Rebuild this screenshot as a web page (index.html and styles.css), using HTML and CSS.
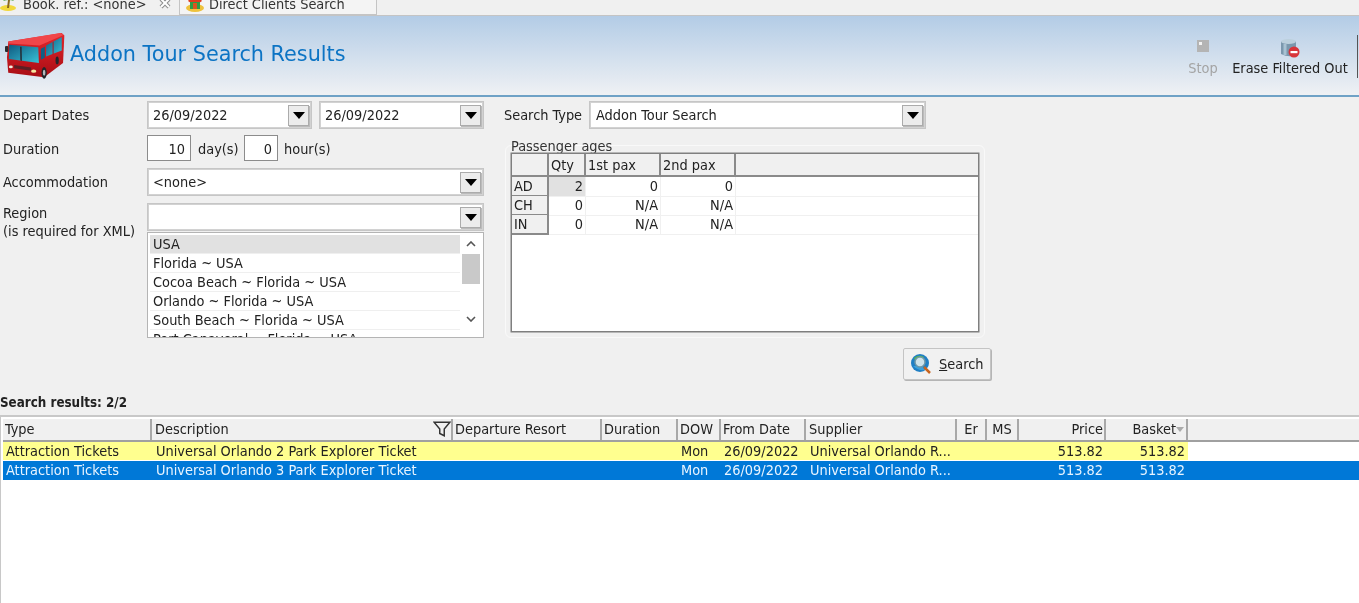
FILE: index.html
```html
<!DOCTYPE html>
<html lang="en">
<head>
<meta charset="utf-8">
<title>Addon Tour Search Results</title>
<link rel="stylesheet" href="styles.css">
</head>
<body>
<nav class="tabs">
  <div class="tab tab-active">
    <svg class="tab-icon" viewBox="0 0 18 14"><ellipse cx="8" cy="11" rx="8" ry="3" fill="#f2d83c"/><path d="M8 11 L9 3" stroke="#8a6a20" stroke-width="2"/><path d="M3 4 Q9 -2 14 4 Q9 2 3 4Z" fill="#3f9a35"/></svg>
    <span class="tab-text">Book. ref.: &lt;none&gt;</span>
    <svg class="tab-close" viewBox="0 0 14 14"><path d="M3 3 L11 11 M11 3 L3 11" stroke="#8d8d8d" stroke-width="4"/><path d="M3 3 L11 11 M11 3 L3 11" stroke="#fff" stroke-width="2"/></svg>
  </div>
  <div class="tab tab-other">
    <svg class="tab-icon" viewBox="0 0 18 18"><ellipse cx="9" cy="14" rx="9" ry="4" fill="#eec23c"/><path d="M2 7 Q9 -2 16 7 L13 9 H5Z" fill="#de3a1e"/><rect x="4" y="8" width="10" height="7" fill="#2f9a45"/><rect x="7" y="9" width="4" height="6" fill="#d9521f"/></svg>
    <span class="tab-text">Direct Clients Search</span>
  </div>
</nav>

<header class="banner">
  <svg class="bus" viewBox="12 22 184 145">
    <defs>
      <linearGradient id="glass" x1="0" y1="0" x2="1" y2="1"><stop offset="0" stop-color="#0f5a80"/><stop offset="1" stop-color="#39c3d8"/></linearGradient>
      <linearGradient id="side" x1="0" y1="0" x2="0" y2="1"><stop offset="0" stop-color="#e3262c"/><stop offset="1" stop-color="#a80d14"/></linearGradient>
    </defs>
    <path d="M22 50 L186 24 L194 32 L190 116 L132 160 L22 146 L18 100Z" fill="url(#side)"/>
    <path d="M22 50 L182 24 L192 30 L118 62 L24 56Z" fill="#f0464a"/>
    <path d="M25 60 L114 68 L116 116 L24 104Z" fill="url(#glass)"/>
    <path d="M58 66 L63 66 L64 110 L59 108Z" fill="#24323c"/>
    <path d="M122 72 L134 66 L134 100 L122 106Z" fill="#0c5f85"/>
    <path d="M138 62 L186 36 L186 78 L138 96Z" fill="url(#glass)"/>
    <path d="M158 52 L161 50 L161 88 L158 90Z" fill="#b0141a"/>
    <path d="M40 122 L92 130 L92 140 L40 132Z" fill="#5b2024"/>
    <ellipse cx="30" cy="128" rx="6" ry="4" fill="#f1efe0"/>
    <ellipse cx="100" cy="141" rx="8" ry="5" fill="#f5e7a0"/>
    <ellipse cx="132" cy="146" rx="8" ry="18" fill="#23252a"/>
    <ellipse cx="132" cy="146" rx="4" ry="9" fill="#b5b8bc"/>
    <ellipse cx="172" cy="108" rx="5" ry="12" fill="#23252a"/>
    <rect x="12" y="64" width="10" height="18" rx="3" fill="#2a2c30"/>
  </svg>
  <h1 class="title">Addon Tour Search Results</h1>
  <div class="tools">
    <div class="tool tool-stop">
      <svg class="tool-icon-stop" viewBox="0 0 12 12"><rect width="12" height="12" fill="#b4b4b4"/><rect x="2" y="2" width="3" height="3" fill="#f2f2f2"/></svg>
      <span>Stop</span>
    </div>
    <div class="tool tool-erase">
      <svg class="tool-icon-erase" viewBox="0 0 20 20"><path d="M1 3 V16 Q9 20 16 17 V3Z" fill="#7b98ad"/><ellipse cx="8.500" cy="3.500" rx="7.500" ry="2.500" fill="#bcd0dd"/><path d="M5 6 V17" stroke="#a9c2d2" stroke-width="3"/><circle cx="14" cy="14" r="5.500" fill="#d8353a"/><rect x="10.500" y="13" width="7" height="2.200" fill="#fff"/></svg>
      <span>Erase Filtered Out</span>
    </div>
    <div class="tool-sep"></div>
  </div>
</header>

<section class="form">
  <div class="form-left">
    <div class="row row-date">
      <label class="lbl">Depart Dates</label>
      <div class="field-pair">
        <div class="combo"><span class="combo-text">26/09/2022</span><span class="drop"><i class="tri"></i></span></div>
        <div class="combo"><span class="combo-text">26/09/2022</span><span class="drop"><i class="tri"></i></span></div>
      </div>
    </div>
    <div class="row row-duration">
      <label class="lbl">Duration</label>
      <div class="spin spin-day">10</div><span class="unit unit-day">day(s)</span>
      <div class="spin spin-hour">0</div><span class="unit unit-hour">hour(s)</span>
    </div>
    <div class="row row-acc">
      <label class="lbl">Accommodation</label>
      <div class="combo combo-wide"><span class="combo-text">&lt;none&gt;</span><span class="drop"><i class="tri"></i></span></div>
    </div>
    <div class="row row-region">
      <label class="lbl lbl-two">Region<br>(is required for XML)</label>
      <div class="region">
        <div class="combo combo-wide"><span class="combo-text"></span><span class="drop"><i class="tri"></i></span></div>
        <div class="list">
          <div class="list-items">
            <div class="item item-sel">USA</div>
            <div class="item">Florida ~ USA</div>
            <div class="item">Cocoa Beach ~ Florida ~ USA</div>
            <div class="item">Orlando ~ Florida ~ USA</div>
            <div class="item">South Beach ~ Florida ~ USA</div>
            <div class="item">Port Canaveral ~ Florida ~ USA</div>
          </div>
          <div class="scroll">
            <svg class="chev" viewBox="0 0 10 6"><path d="M1 5 L5 1 L9 5" fill="none" stroke="#555" stroke-width="1.600"/></svg>
            <div class="thumb"></div>
            <svg class="chev chev-down" viewBox="0 0 10 6"><path d="M1 1 L5 5 L9 1" fill="none" stroke="#555" stroke-width="1.600"/></svg>
          </div>
        </div>
      </div>
    </div>
  </div>

  <div class="form-right">
    <div class="row row-type">
      <label class="lbl lbl-type">Search Type</label>
      <div class="combo combo-type"><span class="combo-text">Addon Tour Search</span><span class="drop"><i class="tri"></i></span></div>
    </div>
    <fieldset class="group">
      <div class="group-label">Passenger ages</div>
      <div class="pax">
        <div class="pax-row pax-head">
          <div class="ph"></div><div class="ph">Qty</div><div class="ph">1st pax</div><div class="ph">2nd pax</div><div class="ph ph-fill"></div>
        </div>
        <div class="pax-row">
          <div class="prh">AD</div><div class="pc pc-sel">2</div><div class="pc">0</div><div class="pc">0</div><div class="pc-fill"></div>
        </div>
        <div class="pax-row">
          <div class="prh">CH</div><div class="pc">0</div><div class="pc">N/A</div><div class="pc">N/A</div><div class="pc-fill"></div>
        </div>
        <div class="pax-row">
          <div class="prh">IN</div><div class="pc">0</div><div class="pc">N/A</div><div class="pc">N/A</div><div class="pc-fill"></div>
        </div>
      </div>
    </fieldset>
    <button class="search-btn" type="button">
      <svg class="search-icon" viewBox="0 0 22 22"><circle cx="10" cy="10" r="9" fill="#1f7fc4"/><path d="M4 5 Q9 1 14 4 L12 8 L6 9Z" fill="#58b848"/><path d="M3 13 Q8 18 15 17 L12 13Z" fill="#3aa0dc"/><circle cx="10" cy="9" r="5" fill="#cfe3ea" stroke="#6f98a8" stroke-width="1.500"/><path d="M14 14 L20 20" stroke="#c8641e" stroke-width="2.500"/></svg>
      <span><u>S</u>earch</span>
    </button>
  </div>
</section>

<div class="results-label">Search results: 2/2</div>

<section class="results">
  <div class="res-row res-head">
    <div class="hc">Type</div>
    <div class="hc hc-filter hc-in">Description<svg class="filter" viewBox="0 0 16 14"><path d="M1 1 H15 L10 7 V13 L6 11 V7Z" fill="none" stroke="#333" stroke-width="1.300"/></svg></div>
    <div class="hc">Departure Resort</div>
    <div class="hc">Duration</div>
    <div class="hc">DOW</div>
    <div class="hc">From Date</div>
    <div class="hc hc-in">Supplier</div>
    <div class="hc hc-center">Er</div>
    <div class="hc hc-center">MS</div>
    <div class="hc hc-right">Price</div>
    <div class="hc hc-right hc-sort">Basket<i class="sort"></i></div>
    <div class="hc-fill"></div>
  </div>
  <div class="res-row res-yellow">
    <div class="c">Attraction Tickets</div>
    <div class="c c-in">Universal Orlando 2 Park Explorer Ticket</div>
    <div class="c"></div><div class="c"></div>
    <div class="c">Mon</div>
    <div class="c">26/09/2022</div>
    <div class="c c-in">Universal Orlando R...</div>
    <div class="c"></div><div class="c"></div>
    <div class="c c-right">513.82</div>
    <div class="c c-right">513.82</div>
  </div>
  <div class="res-row res-blue">
    <div class="c">Attraction Tickets</div>
    <div class="c c-in">Universal Orlando 3 Park Explorer Ticket</div>
    <div class="c"></div><div class="c"></div>
    <div class="c">Mon</div>
    <div class="c">26/09/2022</div>
    <div class="c c-in">Universal Orlando R...</div>
    <div class="c"></div><div class="c"></div>
    <div class="c c-right">513.82</div>
    <div class="c c-right">513.82</div>
  </div>
</section>
</body>
</html>
```
FILE: styles.css
```css
* { box-sizing: border-box; }
html, body { margin: 0; padding: 0; height: 603px; overflow: hidden; }
body {
  background: #f0f0f0;
  color: #222;
  font-family: "DejaVu Sans Condensed", "DejaVu Sans", sans-serif;
  font-size: 14.4px;
  line-height: 16px;
  filter: blur(0.35px);
}

/* tabs */
.tabs { display: flex; height: 16px; border-bottom: 1px solid #c4c4c4; overflow: hidden; }
.tab { display: flex; align-items: center; height: 15px; position: relative; }
.tab-active { width: 179px; }
.tab-other { width: 198px; background: #f4f4f4; border: 1px solid #c4c4c4; border-top: 0; padding-left: 6px; }
.tab-icon { width: 18px; height: 18px; flex: none; margin-top: -9px; }
.tab-active .tab-icon { margin-left: 0; margin-top: -8px; }
.tab-text { margin-left: 5px; margin-top: -7px; white-space: nowrap; color: #333; }
.tab-close { width: 14px; height: 14px; margin-left: 11px; margin-top: -10px; flex: none; }

/* banner */
.banner {
  display: flex;
  align-items: flex-start;
  height: 81px;
  padding-left: 5px;
  background: linear-gradient(#b3cce6, #eff1f4);
  border-bottom: 2px solid #6fa2c6;
}
.bus { width: 60px; height: 52px; margin-top: 14px; flex: none; }
.title {
  margin: 26px 0 0 5px;
  font-family: "DejaVu Sans", sans-serif;
  font-size: 20.750px;
  line-height: 24px;
  font-weight: 400;
  color: #0c74c4;
}
.tools { display: flex; margin-left: auto; height: 100%; }
.tool { display: flex; flex-direction: column; align-items: center; white-space: nowrap; }
.tool-stop { width: 30px; color: #a4a4a4; margin-right: 14px; }
.tool-erase { width: 116px; color: #222; }
.tool-icon-stop { width: 12px; height: 12px; margin-top: 24px; margin-bottom: 8px; }
.tool-icon-erase { width: 20px; height: 20px; margin-top: 22px; margin-bottom: 2px; }
.tool-sep { width: 1px; height: 43px; margin: 19px 1px 0 9px; background: #555; }

/* form */
.form { display: flex; height: 283px; padding: 4px 0 0 3px; }
.form-left { width: 481px; flex: none; }
.form-right { width: 487px; margin-left: 20px; display: flex; flex-direction: column; flex: none; }
.row { display: flex; align-items: center; }
.row-date, .row-acc, .row-type { height: 28px; }
.row-duration { height: 26px; margin: 6px 0 7px; padding-top: 0; }
.row-duration .lbl, .row-duration .unit { padding-top: 2px; }
.row-region { align-items: flex-start; margin-top: 7px; }
.lbl { width: 144px; flex: none; white-space: nowrap; }
.lbl-two { line-height: 18px; margin-top: 1px; }
.lbl-type { width: 85px; }
.field-pair { display: flex; gap: 7px; flex: 1; }
.combo {
  display: flex; align-items: center; justify-content: space-between;
  width: 165px; height: 28px; padding: 0 2px 0 5px;
  background: #fff; border: 1px solid #c6c6c6;
  box-shadow: inset 0 0 0 1px #d2d2d2;
}
.combo-wide { width: 337px; }
.combo-type { width: 337px; padding-left: 6px; }
.combo-text { white-space: nowrap; }
.drop {
  display: flex; align-items: center; justify-content: center;
  width: 21px; height: 21px; flex: none;
  background: #ececec; border: 1px solid #ababab;
  box-shadow: 1px 1px 0 #bbb;
}
.tri { width: 0; height: 0; border: 6px solid transparent; border-top: 7px solid #000; border-bottom: 0; }
.spin { height: 26px; background: #fff; border: 1px solid #8c8c8c; text-align: right; line-height: 26px; padding-right: 5px; flex: none; }
.spin-day { width: 44px; }
.spin-hour { width: 34px; }
.unit { white-space: nowrap; }
.unit-day { width: 53px; padding-left: 7px; }
.unit-hour { padding-left: 6px; }
.region { width: 337px; flex: none; }
.list {
  display: flex; height: 106px; margin-top: 1px; padding: 2px 0 0 2px;
  background: #fff; border: 1px solid #b4b4b4; overflow: hidden;
}
.list-items { width: 310px; flex: none; }
.item { height: 19px; line-height: 19px; padding-left: 3px; border-bottom: 1px solid #efefef; white-space: nowrap; }
.item-sel { background: #e1e1e1; }
.scroll { width: 18px; margin-left: 2px; display: flex; flex-direction: column; align-items: center; }
.chev { width: 10px; height: 6px; margin-top: 6px; flex: none; }
.thumb { width: 18px; height: 30px; margin-top: 7px; background: #c9c9c9; flex: none; }
.chev-down { margin-top: 32px; }

/* passenger grid */
.group {
  width: 480px; height: 193px; margin: 16px 0 0 1px; padding: 0 5px 0 5px;
  border: 1px solid #f9f9f9; border-radius: 6px; min-width: 0;
}
.group-label { height: 15px; margin-top: -8px; line-height: 16px; color: #333; }
.pax {
  position: relative; height: 179px; background: #fff; border: 1px solid #7f7f7f;
  box-shadow: 0 0 0 0.500px #7f7f7f;
}
.pax-row { display: grid; grid-template-columns: 37px 37px 75px 75px 1fr; height: 19px; }
.pax-head { height: 23px; background: #f0f0f0; border-bottom: 2px solid #8a8a8a; }
.ph { border-right: 2px solid #8a8a8a; padding-left: 2px; line-height: 22px; white-space: nowrap; }
.ph-fill { border-right: 0; }
.prh { background: #f0f0f0; border-right: 2px solid #8a8a8a; border-bottom: 2px solid #8a8a8a; padding-left: 2px; line-height: 18px; }
.pc { text-align: right; padding-right: 2px; line-height: 18px; border-bottom: 1px solid #f0f0f0; border-right: 1px solid #f0f0f0; }
.pc-sel { background: #e1e1e1; }
.pc-fill { border-bottom: 1px solid #f0f0f0; }

.search-btn {
  display: flex; align-items: center; align-self: flex-end;
  width: 88px; height: 32px; margin-top: 10px; padding: 0 0 0 6px;
  background: #f1f1f1; border: 1px solid #c4c4c4; border-radius: 2px;
  box-shadow: 1px 1px 0 #b5b5b5;
  font: inherit; color: #222;
}
.search-icon { width: 22px; height: 22px; flex: none; margin-right: 7px; }

/* results */
.results-label { height: 16px; margin-top: 15px; margin-bottom: -1px; font-weight: 700; font-size: 13.300px; white-space: nowrap; }
.results {
  height: 188px; margin-top: 5px; padding: 2px 0 0 2px;
  background: #fff; border-top: 2px solid #c8c8c8; border-left: 1px solid #c8c8c8;
}
.res-row {
  display: grid;
  grid-template-columns: 149px 301px 149px 76px 43px 85px 151px 30px 32px 87px 82px 1fr;
  white-space: nowrap;
}
.res-head { height: 23px; background: #f0f0f0; border-bottom: 2px solid #a0a0a0; }
.hc { border-right: 2px solid #a8a8a8; padding-left: 2px; line-height: 21px; overflow: hidden; position: relative; }
.hc-in { padding-left: 3px; }
.hc-fill { background: #f0f0f0; }
.hc-center { text-align: center; padding-left: 0; }
.hc-right { text-align: right; padding: 0 1px 0 0; }
.hc-sort { padding-right: 10px; }
.filter { position: absolute; right: 0; top: 2px; width: 18px; height: 16px; }
.sort { position: absolute; right: 2px; top: 8px; width: 0; height: 0; border: 4px solid transparent; border-top: 5px solid #aaa; border-bottom: 0; }
.res-yellow, .res-blue { height: 19px; line-height: 18px; }
.res-yellow .c { background: #ffff8f; height: 18px; }
.res-blue { background: #0078d7; color: #e8f4ff; }
.c { padding-left: 3px; overflow: hidden; }
.c-in { padding-left: 4px; }
.c-right { text-align: right; padding: 0 3px 0 0; }
```
